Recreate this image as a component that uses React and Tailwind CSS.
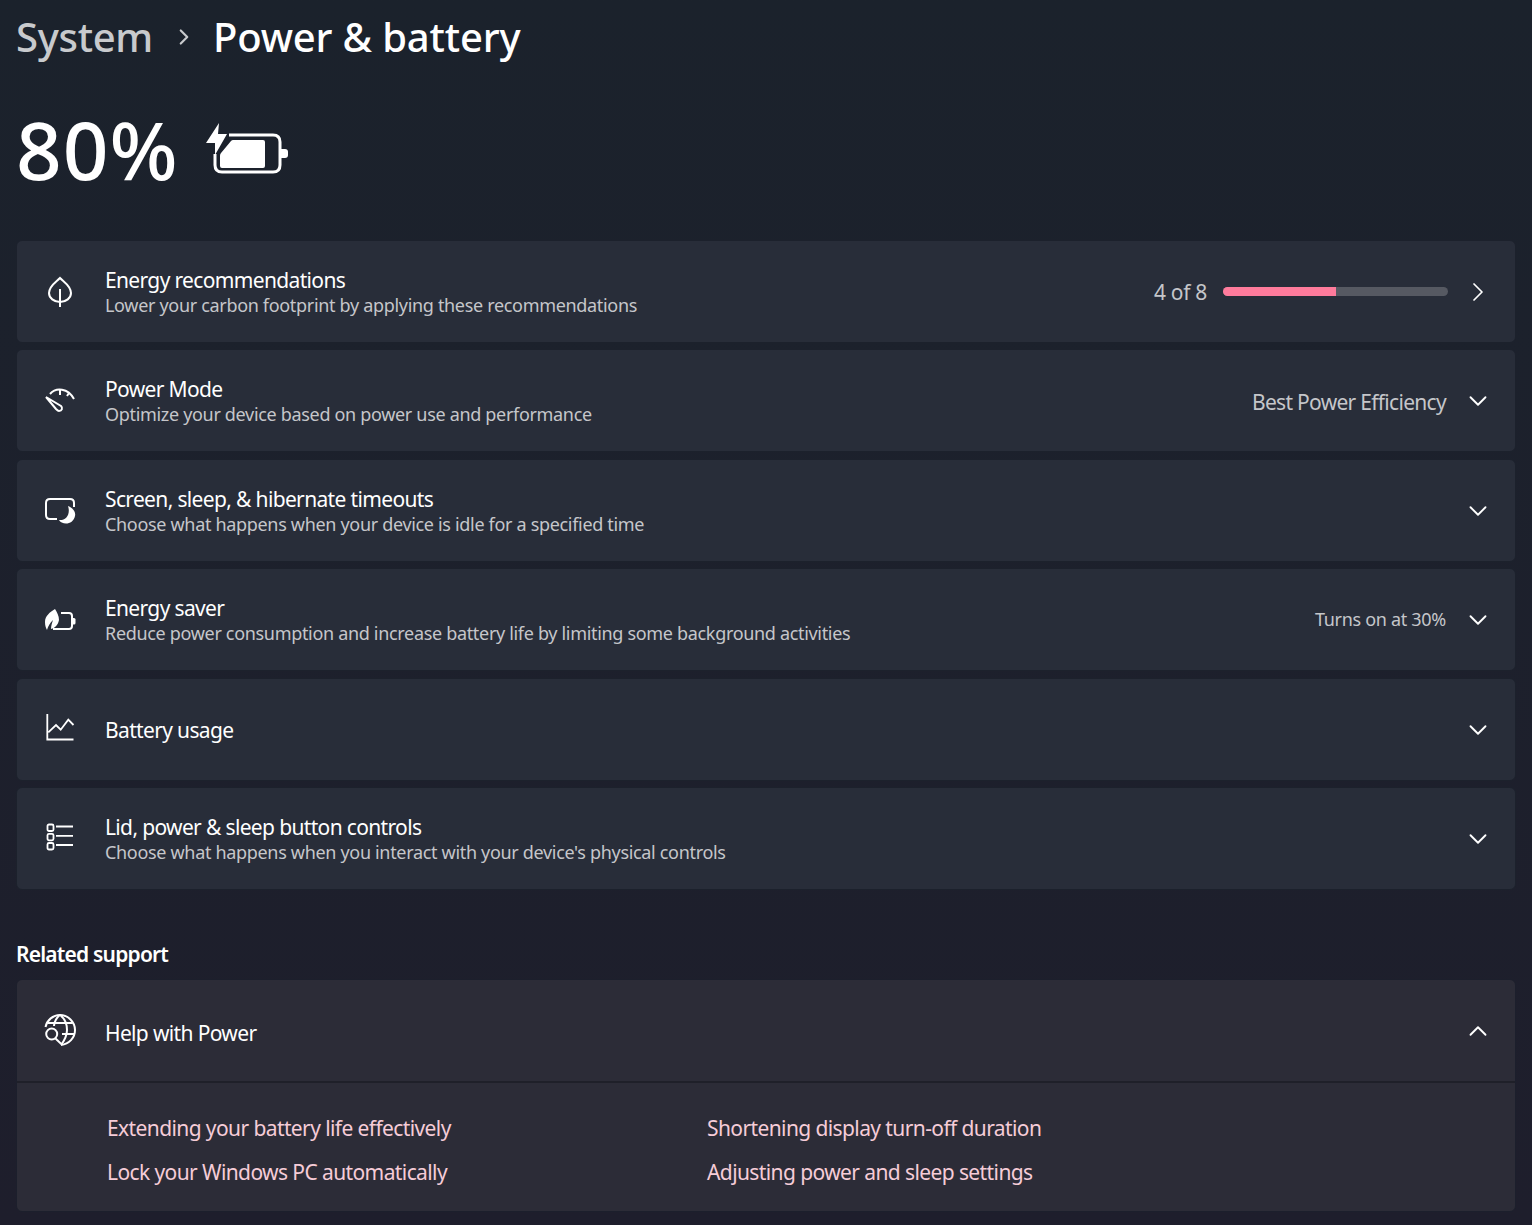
import React from "react";
import { ChevronRight, ChevronDown, ChevronUp } from "lucide-react";

const LeafIcon = () => (
  <svg width="30" height="36" viewBox="0 0 30 36" fill="none" stroke="white" strokeWidth="2">
    <path d="M15 4 C11 8 4 12 4 19 C4 24 9 28 15 28 C21 28 26 24 26 19 C26 12 19 8 15 4 Z" />
    <path d="M15 15 V33" />
  </svg>
);

const GaugeIcon = () => (
  <svg width="32" height="30" viewBox="0 0 32 30" fill="none" stroke="white" strokeWidth="2">
    <path d="M6 8 C12 1 24 2 30 13" />
    <path d="M16 3 V9 M25 7 L23 10" />
    <path d="M2 11 L17 20 C19 22 18 25 15 25 C14 25 13 24 12 23 Z" />
  </svg>
);

const ScreenIcon = () => (
  <svg width="32" height="28" viewBox="0 0 32 28" fill="none">
    <path d="M13 23 H6 Q2 23 2 19 V7 Q2 3 6 3 H26 Q30 3 30 7 V11" stroke="white" strokeWidth="2" />
    <path d="M24 10 C29 12 32 16 31 20 C30 25 26 27.500 22 27.500 C19 27.500 16 26 15 24 C21 25 27 19 24 10 Z" fill="white" />
  </svg>
);

const SaverIcon = () => (
  <svg width="32" height="26" viewBox="0 0 32 26" fill="none">
    <path d="M11 2 C6 5 1 9 1 15 C1 19 2 21 3 23 C4 19 6 16 9 13 C8 16 7 19 7 22 C11 21 14 18 15 13 C15 9 13 5 11 2 Z" fill="white" />
    <path d="M17 6 H25 Q28 6 28 9 V19 Q28 22 25 22 H9" stroke="white" strokeWidth="2" />
    <path d="M28 11 H30 Q31.500 11 31.500 12.500 V16 Q31.500 17.500 30 17.500 H28 Z" fill="white" />
  </svg>
);

const ChartIcon = () => (
  <svg width="30" height="30" viewBox="0 0 30 30" fill="none" stroke="white" strokeWidth="1.800">
    <path d="M2.300 0 V25.500 H28.500" />
    <path d="M3.300 18.300 L11 11 L15.700 15.700 L23.300 5.700 L28.500 11" />
  </svg>
);

const ListIcon = () => (
  <svg width="30" height="30" viewBox="0 0 30 30" fill="none" stroke="white" strokeWidth="1.800">
    <rect x="2.500" y="1.500" width="6" height="6.500" rx="1.500" />
    <rect x="2.500" y="10.800" width="6" height="6.500" rx="1.500" />
    <rect x="2.500" y="20" width="6" height="6.500" rx="1.500" />
    <path d="M11 3.500 H28 M11 12.800 H28 M11 22 H28" />
  </svg>
);

const GlobeIcon = () => (
  <svg width="32" height="32" viewBox="0 0 32 32" fill="none" stroke="white" strokeWidth="2">
    <path d="M1.500 13 C3 6 9 1 16 1 C24 1 31 8 31 16 C31 24 25 30 17 31" />
    <path d="M10 12 C10 8 13 3 16 1 C20 4 23 10 23 16 C23 22 20 27 17 31" />
    <path d="M3.500 9 H28.500 M18 20 H30.500" />
    <circle cx="7.700" cy="20" r="5.500" />
    <path d="M11.500 24.500 L17 29.700" />
  </svg>
);

const BatteryIcon = () => (
  <svg width="84" height="52" viewBox="0 0 84 52" fill="none">
    <path d="M14 1 L1 21 H10 V33 L22 12 H13 Z" fill="white" />
    <path d="M24 13 H68 Q75 13 75 20 V43 Q75 50 68 50 H17 Q10 50 10 43 V32" stroke="white" strokeWidth="3" />
    <path d="M28 18 H58 Q60 18 60 20 V44 Q60 46 58 46 H17 Q15 46 15 44 V34 Q15 32 16 31 L26 19 Q27 18 28 18 Z" fill="white" />
    <path d="M75 27 H80 Q83 27 83 30 V33 Q83 36 80 36 H75 Z" fill="white" />
  </svg>
);

const rows = [
  { icon: <LeafIcon />, title: "Energy recommendations", sub: "Lower your carbon footprint by applying these recommendations", progress: true },
  { icon: <GaugeIcon />, title: "Power Mode", sub: "Optimize your device based on power use and performance", value: "Best Power Efficiency" },
  { icon: <ScreenIcon />, title: "Screen, sleep, & hibernate timeouts", sub: "Choose what happens when your device is idle for a specified time" },
  { icon: <SaverIcon />, title: "Energy saver", sub: "Reduce power consumption and increase battery life by limiting some background activities", small: "Turns on at 30%" },
  { icon: <ChartIcon />, title: "Battery usage" },
  { icon: <ListIcon />, title: "Lid, power & sleep button controls", sub: "Choose what happens when you interact with your device's physical controls" },
];

function Row({ row }) {
  return (
    <div className="flex h-[103px] items-center rounded-md border border-[#1c212c] bg-[#282d39] pl-[27px] pr-[24px]">
      <div className="flex w-[32px] justify-center">{row.icon}</div>
      <div className="ml-[29px] flex-1 pt-[3px]">
        <p className="text-[21px] leading-[25px] tracking-[-0.65px] text-white">{row.title}</p>
        {row.sub && (
          <p className="text-[18px] leading-[25px] tracking-[-0.32px] text-[#c5c6ca]">{row.sub}</p>
        )}
      </div>
      {row.progress && (
        <div className="-mr-[2px] flex items-center">
          <span className="pt-[2px] text-[21px] tracking-[-0.3px] text-[#c5c6ca]">4 of 8</span>
          <div className="ml-4 h-[9px] w-[225px] overflow-hidden rounded-full bg-[#565962]">
            <div className="h-full w-1/2 bg-[#ff7b9c]" />
          </div>
        </div>
      )}
      {row.value && <span className="pt-[3px] text-[21px] tracking-[-0.7px] text-[#c5c6ca]">{row.value}</span>}
      {row.small && <span className="text-[18px] tracking-[-0.3px] text-[#c5c6ca]">{row.small}</span>}
      <div className="ml-[19px] flex w-[26px] justify-center">
        {row.progress ? (
          <ChevronRight className="shrink-0" size={32} strokeWidth={1.3} color="white" />
        ) : (
          <ChevronDown className="mt-[1px] shrink-0" size={30} strokeWidth={1.5} color="white" />
        )}
      </div>
    </div>
  );
}

export default function App() {
  return (
    <div className="h-[1225px] w-[1532px] overflow-hidden bg-gradient-to-b from-[#1b222c] to-[#1e1e2c] px-[16px] font-['Noto_Sans',sans-serif]">
      <div className="flex h-[74px] items-center">
        <span className="text-[40px] font-medium tracking-[-0.3px] text-[#c8cacd]">System</span>
        <ChevronRight className="ml-[18px] mr-[16px] shrink-0" size={26} strokeWidth={2} color="#c8cacd" />
        <span className="text-[40px] font-medium tracking-[-0.15px] text-white">Power &amp; battery</span>
      </div>
      <div className="flex h-[166px] items-center pb-[16px]">
        <span className="text-[80px] font-medium tracking-[1px] text-white">80%</span>
        <div className="ml-[26px] mt-[-2px]"><BatteryIcon /></div>
      </div>
      <div className="flex flex-col gap-[6.4px]">
        {rows.map((row) => (
          <Row key={row.title} row={row} />
        ))}
      </div>
      <p className="mt-[50px] text-[21px] font-semibold leading-[28px] tracking-[-0.8px] text-white">Related support</p>
      <div className="mt-[11px] overflow-hidden rounded-md border border-[#1c1f2c] bg-[#2c2c37]">
        <div className="flex h-[103px] items-center border-b-2 border-[#1f2029] pl-[27px] pr-[24px]">
          <div className="flex w-[32px] justify-center"><GlobeIcon /></div>
          <p className="ml-[29px] flex-1 pt-[6px] text-[21px] tracking-[-0.65px] text-white">Help with Power</p>
          <div className="flex w-[26px] justify-center">
            <ChevronUp className="mt-[2px] shrink-0" size={30} strokeWidth={1.5} color="white" />
          </div>
        </div>
        <div className="grid h-[128px] grid-cols-[600px_1fr] content-center gap-y-[16px] pl-[90px] pt-[7px] text-[21px] leading-[28px] tracking-[-0.6px] text-[#f6ccd8]">
          <span>Extending your battery life effectively</span>
          <span>Shortening display turn-off duration</span>
          <span>Lock your Windows PC automatically</span>
          <span>Adjusting power and sleep settings</span>
        </div>
      </div>
    </div>
  );
}
